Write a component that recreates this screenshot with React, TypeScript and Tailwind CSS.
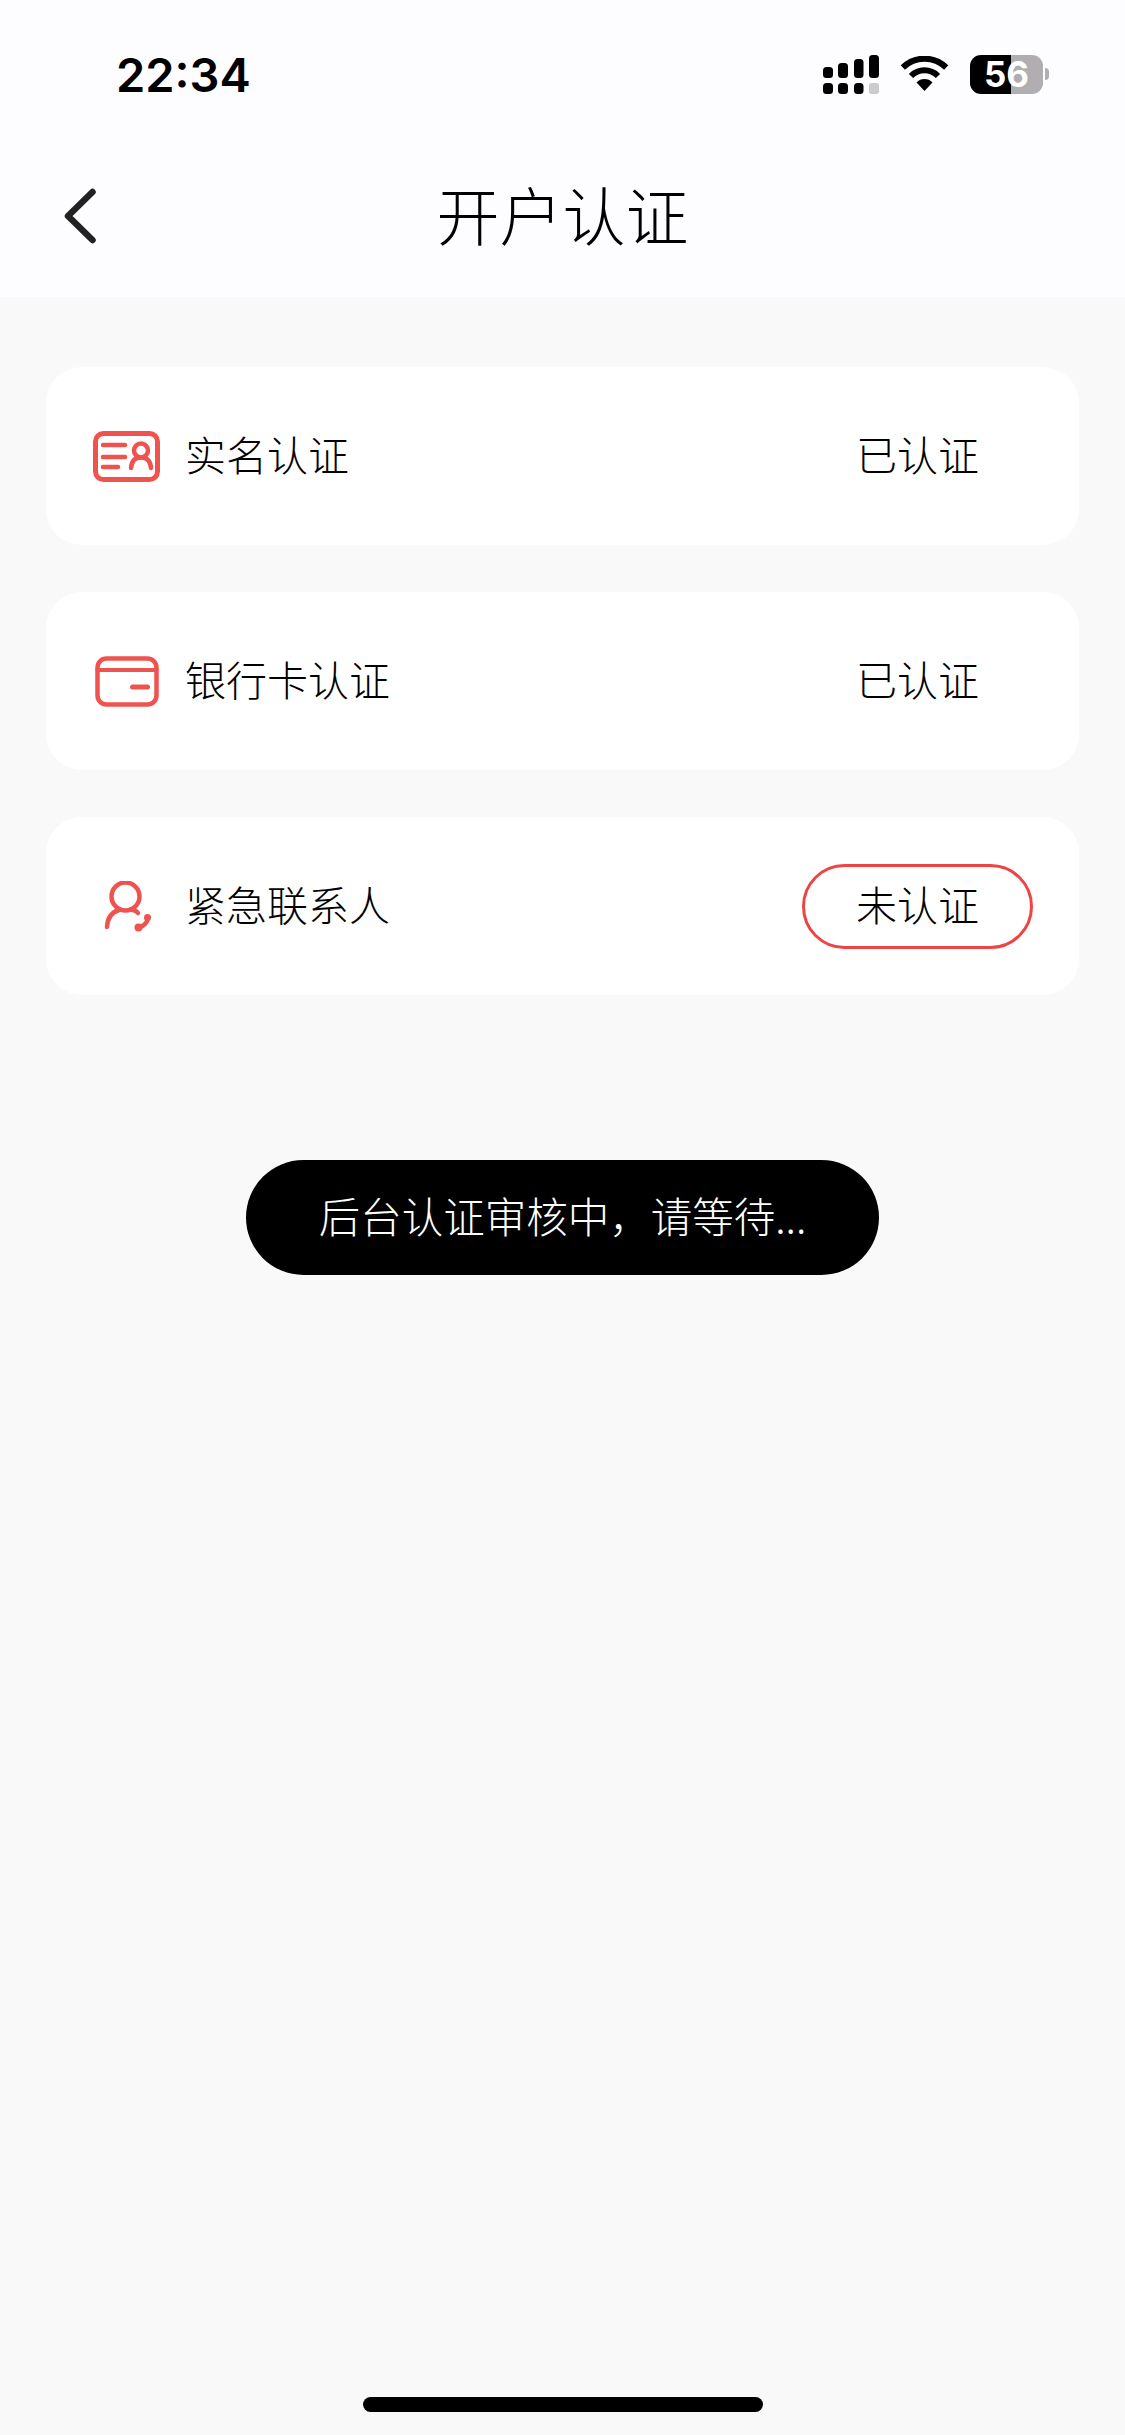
const cjk = { fontFamily: '"Noto Sans CJK SC", "Noto Sans", sans-serif' };

function SignalIcon() {
  return (
    <svg width="56" height="39" viewBox="0 0 56 39" className="shrink-0">
      <rect x="0" y="12" width="10" height="11" rx="3.5" fill="#000" />
      <rect x="15" y="8" width="10" height="15" rx="3.5" fill="#000" />
      <rect x="31" y="4" width="9.5" height="19" rx="3.5" fill="#000" />
      <rect x="46" y="0" width="10" height="23" rx="3.5" fill="#000" />
      <rect x="0" y="28" width="10" height="11" rx="3.5" fill="#000" />
      <rect x="15" y="28" width="10" height="11" rx="3.5" fill="#000" />
      <rect x="31" y="28" width="9.5" height="11" rx="3.5" fill="#000" />
      <rect x="46" y="28" width="10" height="11" rx="2.5" fill="#cbcbcb" />
    </svg>
  );
}

function WifiIcon() {
  return (
    <svg width="49" height="36" viewBox="0 0 49 36" className="shrink-0">
      <path d="M2.8 11.5a31 31 0 0 1 43.4 0" fill="none" stroke="#000" strokeWidth="6" />
      <path d="M11 20a19 19 0 0 1 27 0" fill="none" stroke="#000" strokeWidth="6" />
      <path d="M16.5 26.500a11 11 0 0 1 16 0L24.500 35z" fill="#000" />
    </svg>
  );
}

function BatteryIcon() {
  return (
    <div className="flex items-center gap-[2px]">
      <div className="relative flex h-[39px] w-[73px]">
        <div className="w-[41px] rounded-l-[11px] bg-black" />
        <div className="flex-1 rounded-r-[11px] bg-[#b0aeb0]" />
        <span
          className="absolute inset-0 flex items-center justify-center text-[35px] font-bold leading-none text-white"
          style={{ fontFamily: "Inter, sans-serif" }}
        >
          56
        </span>
      </div>
      <div className="h-[12px] w-[4px] rounded-r-full bg-[#b0aeb0]" />
    </div>
  );
}

function BackIcon() {
  return (
    <svg width="36" height="60" viewBox="0 0 36 60" fill="none" stroke="#222222" strokeWidth="6.5" strokeLinecap="round" strokeLinejoin="round">
      <path d="M30.500 6 6 30l24.500 24" />
    </svg>
  );
}

function IdCardIcon() {
  return (
    <svg width="67" height="51" viewBox="0 0 67 51" fill="none" stroke="#ef5350" strokeLinecap="round" className="shrink-0">
      <rect x="2.500" y="2.500" width="62" height="46" rx="8" strokeWidth="5" />
      <path d="M10 14h22M10 26h22M10 36h15" strokeWidth="4.500" />
      <circle cx="48" cy="19.500" r="7" strokeWidth="4.500" />
      <path d="M38 37c.5-7 4-10.500 10-10.500s9.500 3.500 10 10.500" strokeWidth="4.500" />
    </svg>
  );
}

function BankCardIcon() {
  return (
    <svg width="67" height="51" viewBox="0 0 67 51" fill="none" stroke="#ef5350" strokeLinecap="round" className="shrink-0">
      <rect x="4.500" y="2.500" width="59" height="46" rx="9" strokeWidth="4.500" />
      <path d="M4.500 14h59" strokeWidth="4" />
      <path d="M39.500 31h15" strokeWidth="5" />
    </svg>
  );
}

function ContactIcon() {
  return (
    <svg width="67" height="51" viewBox="0 0 67 51" fill="none" stroke="#ef5350" strokeLinecap="round" className="shrink-0">
      <circle cx="32.500" cy="15.500" r="14" strokeWidth="4.500" />
      <path d="M14 46c.5-9 5-15 12-17M38 28.500c3 .5 5.500 1.500 7 3.500" strokeWidth="4.500" />
      <path d="M55 36c0 5-4 9.500-10 11" strokeWidth="4.500" />
      <circle cx="54.500" cy="36.500" r="3.500" fill="#ef5350" stroke="none" />
      <circle cx="45.500" cy="46.500" r="4" fill="#ef5350" stroke="none" />
    </svg>
  );
}

function Row({ icon, label, done }: { icon: React.ReactNode; label: string; done: boolean }) {
  return (
    <div className="flex h-[178px] items-center justify-between rounded-[36px] bg-white pl-[47px] pr-[46px]">
      <div className="flex items-center gap-[25px]">
        {icon}
        <span className="pb-[6px] text-[41px] font-light leading-none text-black">{label}</span>
      </div>
      <div
        className={
          done
            ? "flex h-[85px] w-[231px] items-center justify-center pb-[6px] text-[41px] font-light leading-none text-black"
            : "flex h-[85px] w-[231px] items-center justify-center rounded-full border-[3px] border-[#ee4444] pb-[6px] text-[41px] font-light leading-none text-black"
        }
      >
        {done ? "已认证" : "未认证"}
      </div>
    </div>
  );
}

export default function App() {
  return (
    <div className="flex min-h-[2435px] flex-col bg-[#f9f9f9]" style={cjk}>
      {/* Header */}
      <header className="flex h-[297px] flex-col bg-[#fdfcfe]">
        <div className="flex h-[135px] items-center justify-between pl-[116px] pr-[76px] pt-[13px]">
          <span
            className="text-[47px] font-semibold leading-none text-black"
            style={{ fontFamily: "Inter, sans-serif" }}
          >
            22:34
          </span>
          <div className="flex items-center gap-[21px]">
            <SignalIcon />
            <WifiIcon />
            <BatteryIcon />
          </div>
        </div>
        <div className="grid h-[162px] grid-cols-[1fr_auto_1fr] items-center pl-[62px]">
          <BackIcon />
          <h1 className="-ml-[62px] pb-[8px] text-[63px] font-light leading-none text-black">开户认证</h1>
        </div>
      </header>

      {/* Rows */}
      <main className="flex flex-col gap-[47px] px-[46px] pt-[70px]">
        <Row icon={<IdCardIcon />} label="实名认证" done />
        <Row icon={<BankCardIcon />} label="银行卡认证" done />
        <Row icon={<ContactIcon />} label="紧急联系人" done={false} />
      </main>

      {/* Toast */}
      <div className="mt-[165px] flex justify-center">
        <div className="flex h-[115px] w-[633px] items-center justify-center rounded-full bg-black pb-[4px] text-[41.5px] leading-none font-light text-white">
          后台认证审核中，请等待...
        </div>
      </div>

      {/* Home indicator */}
      <div className="mt-auto flex justify-center pb-[23px]">
        <div className="h-[15px] w-[400px] rounded-full bg-black" />
      </div>
    </div>
  );
}
